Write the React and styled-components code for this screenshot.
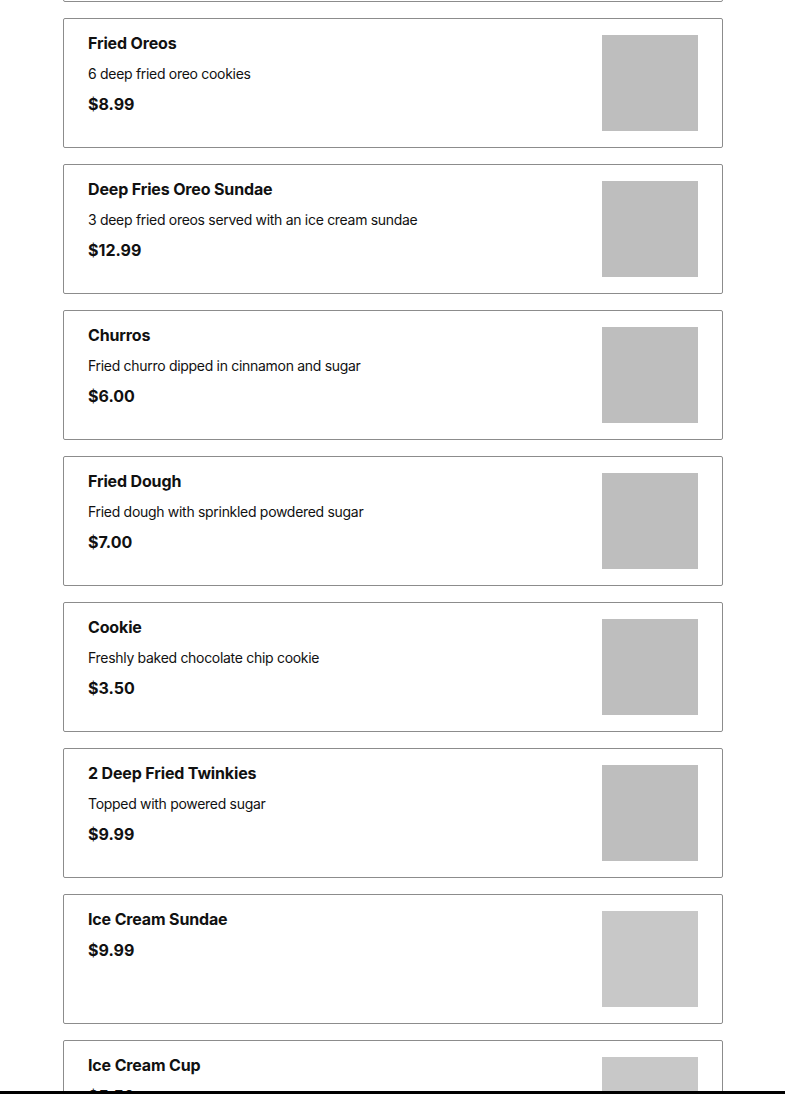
import React from "react";
import styled, { createGlobalStyle } from "styled-components";

const Global = createGlobalStyle`
  html, body { margin: 0; padding: 0; background: #fff; }
  body { font-family: Inter, "Noto Sans", sans-serif; color: #111; overflow: hidden; }
`;

const Page = styled.main`
  width: 660px;
  margin: -128px auto 0 63px;
  display: flex;
  flex-direction: column;
  gap: 16px;
`;

const Card = styled.article`
  display: flex;
  justify-content: space-between;
  align-items: flex-start;
  box-sizing: content-box;
  height: 96px;
  padding: 16px 24px;
  border: 1px solid #8c8c8c;
  border-radius: 2px;
  background: #fff;
`;

const Info = styled.div`
  display: flex;
  flex-direction: column;
`;

const Title = styled.h3`
  margin: 0 0 13px;
  font-size: 16px;
  line-height: 16px;
  font-weight: 700;
  letter-spacing: -0.15px;
  color: #111;
`;

const Desc = styled.p`
  margin: 0 0 10px;
  font-size: 14px;
  line-height: 20px;
  font-weight: 400;
  letter-spacing: -0.3px;
  color: #111;
`;

const Price = styled.div`
  font-size: 16px;
  line-height: 20px;
  font-weight: 700;
  color: #111;
`;

const Thumb = styled.div`
  width: 96px;
  height: 96px;
  flex-shrink: 0;
  background: ${(p) => p.$tone || "#bebebe"};
`;

const BottomBar = styled.div`
  position: fixed;
  left: 0;
  right: 0;
  bottom: 0;
  height: 3px;
  background: #000;
`;

const items = [
  { title: "Funnel Cake", desc: "Classic funnel cake with powdered sugar", price: "$8.99" },
  { title: "Fried Oreos", desc: "6 deep fried oreo cookies", price: "$8.99" },
  { title: "Deep Fries Oreo Sundae", desc: "3 deep fried oreos served with an ice cream sundae", price: "$12.99" },
  { title: "Churros", desc: "Fried churro dipped in cinnamon and sugar", price: "$6.00" },
  { title: "Fried Dough", desc: "Fried dough with sprinkled powdered sugar", price: "$7.00" },
  { title: "Cookie", desc: "Freshly baked chocolate chip cookie", price: "$3.50" },
  { title: "2 Deep Fried Twinkies", desc: "Topped with powered sugar", price: "$9.99" },
  { title: "Ice Cream Sundae", price: "$9.99", tone: "#c8c8c8" },
  { title: "Ice Cream Cup", price: "$5.50", tone: "#c8c8c8" },
];

export default function App() {
  return (
    <>
      <Global />
      <Page>
        {items.map((it) => (
          <Card key={it.title}>
            <Info>
              <Title>{it.title}</Title>
              {it.desc && <Desc>{it.desc}</Desc>}
              <Price>{it.price}</Price>
            </Info>
            <Thumb $tone={it.tone} />
          </Card>
        ))}
      </Page>
      <BottomBar />
    </>
  );
}
